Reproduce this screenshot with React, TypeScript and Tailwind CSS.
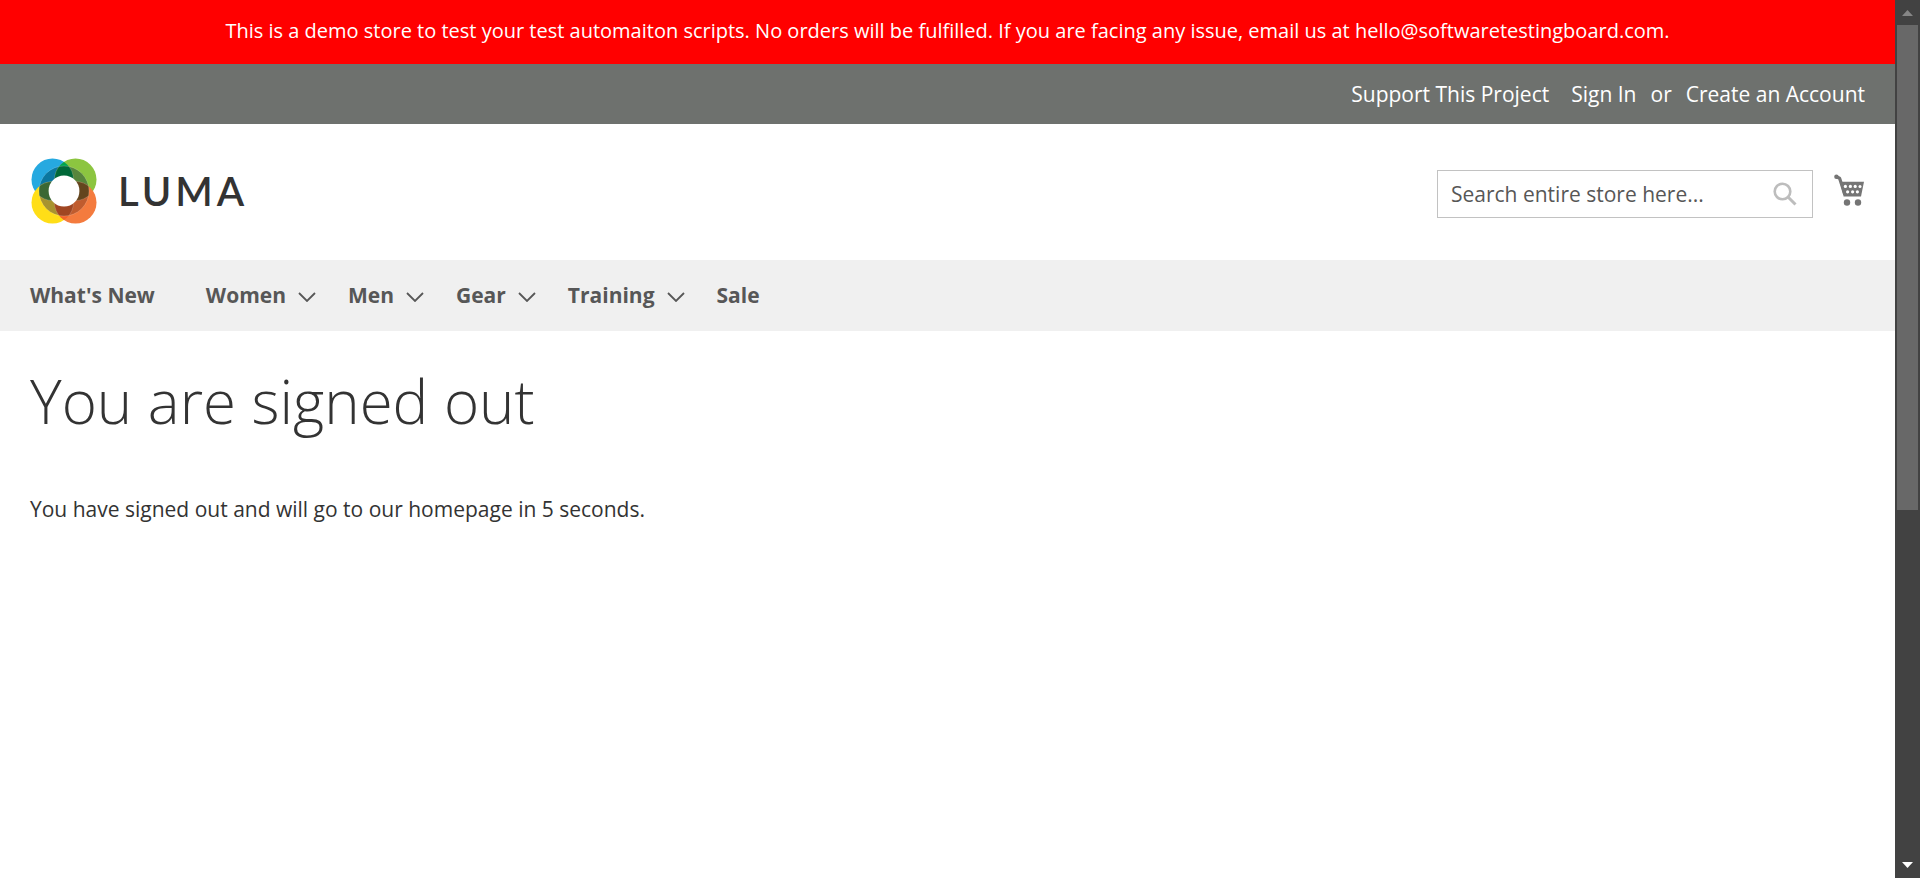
import React from "react";

const navItems = [
  { label: "What's New", menu: false },
  { label: "Women", menu: true },
  { label: "Men", menu: true },
  { label: "Gear", menu: true },
  { label: "Training", menu: true },
  { label: "Sale", menu: false },
];

function LumaMark() {
  return (
    <svg viewBox="0 0 66 66" className="h-[66px] w-[66px]" aria-hidden="true">
      <defs>
        <clipPath id="blue"><circle cx="21.5" cy="21.5" r="21" /></clipPath>
        <clipPath id="yellow"><circle cx="21.5" cy="44.5" r="21" /></clipPath>
        <clipPath id="orange"><circle cx="44.5" cy="44.5" r="21" /></clipPath>
        <clipPath id="ring"><circle cx="33" cy="33" r="25" /></clipPath>
      </defs>
      <circle cx="21.5" cy="21.5" r="21" fill="#26a9e0" />
      <circle cx="44.5" cy="21.5" r="21" fill="#8cc540" />
      <circle cx="21.5" cy="44.5" r="21" fill="#ffde17" />
      <circle cx="44.5" cy="44.5" r="21" fill="#f47b3e" />
      <g clipPath="url(#blue)"><circle cx="44.5" cy="21.5" r="21" fill="#00a450" /></g>
      <g clipPath="url(#yellow)"><circle cx="44.5" cy="44.5" r="21" fill="#f1652a" /></g>
      <g clipPath="url(#ring)">
        <circle cx="21.5" cy="21.5" r="21" fill="#0b779f" />
        <circle cx="44.5" cy="21.5" r="21" fill="#57853c" />
        <circle cx="21.5" cy="44.5" r="21" fill="#a8932f" />
        <circle cx="44.5" cy="44.5" r="21" fill="#c05c2e" />
        <g clipPath="url(#blue)">
          <circle cx="44.5" cy="21.5" r="21" fill="#006838" />
          <circle cx="21.5" cy="44.5" r="21" fill="#3b6834" />
        </g>
        <g clipPath="url(#orange)">
          <circle cx="44.5" cy="21.5" r="21" fill="#64451e" />
          <circle cx="21.5" cy="44.5" r="21" fill="#a04622" />
        </g>
        <g fill="none" stroke="#fff" strokeOpacity="0.25" strokeWidth="0.7">
          <circle cx="21.5" cy="21.5" r="21" />
          <circle cx="44.5" cy="21.5" r="21" />
          <circle cx="21.5" cy="44.5" r="21" />
          <circle cx="44.5" cy="44.5" r="21" />
        </g>
      </g>
      <circle cx="33" cy="33" r="25" fill="none" stroke="#fff" strokeOpacity="0.25" strokeWidth="0.7" />
      <circle cx="33" cy="33" r="15.4" fill="#fff" />
    </svg>
  );
}

function CartIcon() {
  return (
    <svg viewBox="0 0 30 32" className="h-8 w-[30px]" aria-hidden="true">
      <path d="M2.4 2.8 L5.6 4.2 L10.8 20.6" fill="none" stroke="#757575" strokeWidth="3.2" strokeLinejoin="round" />
      <circle cx="2.4" cy="2.8" r="2.2" fill="#757575" />
      <path d="M6 7.8 H30 L27 22.6 H9.6 Z" fill="#757575" />
      <g fill="#fff">
        <circle cx="11.4" cy="12.4" r="1.6" /><circle cx="16.4" cy="12.4" r="1.6" /><circle cx="21.2" cy="12.4" r="1.6" /><circle cx="26" cy="12.4" r="1.5" />
        <circle cx="13.6" cy="17.8" r="1.6" /><circle cx="18.6" cy="17.8" r="1.6" /><circle cx="23.4" cy="17.8" r="1.6" />
      </g>
      <circle cx="13" cy="28.5" r="3.2" fill="#757575" />
      <circle cx="24" cy="28.5" r="3.2" fill="#757575" />
    </svg>
  );
}

export default function App() {
  return (
    <div className="flex min-h-screen bg-white font-['Open_Sans',sans-serif] text-[21px] leading-[30px] text-[#333]">
      <div className="min-w-0 flex-1">
        <p className="bg-[#ff0000] pt-4 pb-[18px] text-center text-[20px] text-white">
          This is a demo store to test your test automaiton scripts. No orders will be fulfilled. If you are facing any issue, email us at hello@softwaretestingboard.com.
        </p>

        <div className="flex justify-end bg-[#6e716e] px-[30px] py-[15px] text-white">
          <a href="#support" className="mr-[22px]">Support This Project</a>
          <a href="#signin" className="mr-[14px]">Sign In</a>
          <span className="mr-[14px]">or</span>
          <a href="#create">Create an Account</a>
        </div>

        <header className="flex items-start justify-between px-[31px] pt-[34px] pb-9">
          <a href="#home" aria-label="Luma" className="flex items-center gap-[21px]">
            <LumaMark />
            <span className="font-['Lato',sans-serif] text-[40px] font-semibold tracking-widest">LUMA</span>
          </a>
          <div className="flex items-start gap-[21px] pt-3">
            <form role="search" className="flex h-12 w-[376px] items-center border border-[#c2c2c2] pr-[15px] pl-[13px]">
              <input
                type="search"
                aria-label="Search"
                placeholder="Search entire store here..."
                className="min-w-0 flex-1 outline-none placeholder:text-[#575757]"
              />
              <button type="button" aria-label="Submit search">
                <svg viewBox="0 0 24 24" className="h-6 w-6" fill="none" stroke="#bdbdbd" strokeWidth="2.6" aria-hidden="true">
                  <circle cx="9.5" cy="9.5" r="7.8" />
                  <path d="M15 15 L22.5 22.5" strokeWidth="3" />
                </svg>
              </button>
            </form>
            <a href="#cart" aria-label="Shopping cart" className="pt-1"><CartIcon /></a>
          </div>
        </header>

        <nav className="bg-[#f0f0f0] px-[30px] pt-5 pb-[21px]">
          <ul className="flex items-center font-bold text-[#575757]">
            {navItems.map((item) => (
              <li key={item.label} className={item.menu ? "mr-8" : "mr-[51px]"}>
                <a href="#menu" className="flex items-center gap-3">
                  {item.label}
                  {item.menu && (
                    <svg viewBox="0 0 18 10" className="mt-1 h-[10px] w-[18px]" fill="none" stroke="#575757" strokeWidth="1.8" aria-hidden="true">
                      <path d="M1 1 L9 9 L17 1" />
                    </svg>
                  )}
                </a>
              </li>
            ))}
          </ul>
        </nav>

        <main className="px-[30px] pt-[37px]">
          <h1 className="mb-[60px] text-[60px] leading-[66px] font-light">You are signed out</h1>
          <p>You have signed out and will go to our homepage in 5 seconds.</p>
        </main>
      </div>

      <div className="sticky top-0 flex h-screen w-[25px] flex-col items-center bg-[#424242] py-[10px]" aria-hidden="true">
        <svg viewBox="0 0 11 6" className="h-[6px] w-[11px]"><path d="M5.5 0 L11 6 H0 Z" fill="#868686" /></svg>
        <div className="mt-[9px] flex w-full flex-1 flex-col px-[2px]">
          <div className="h-[58%] bg-[#686868]" />
        </div>
        <svg viewBox="0 0 11 6" className="h-[6px] w-[11px]"><path d="M0 0 H11 L5.5 6 Z" fill="#fff" /></svg>
      </div>
    </div>
  );
}
